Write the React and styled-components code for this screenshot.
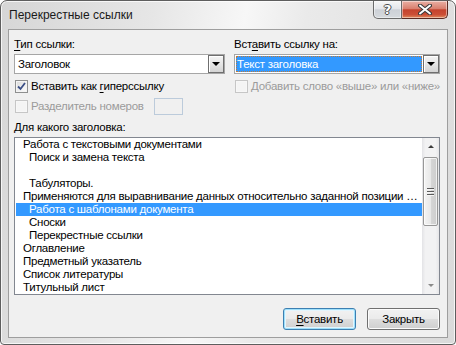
import styled, { createGlobalStyle } from 'styled-components';

const GlobalStyle = createGlobalStyle`
  html, body {
    margin: 0;
    padding: 0;
  }

  body {
    width: 456px;
    height: 345px;
    overflow: hidden;
    background: #ffffff;
    font-family: 'Liberation Sans', Arial, sans-serif;
    font-size: 11.5px;
    letter-spacing: -0.25px;
    color: #000;
  }

  * {
    box-sizing: border-box;
  }
`;

const Window = styled.div`
  width: 456px;
  height: 345px;
  display: flex;
  flex-direction: column;
  border: 1px solid #5e5e5e;
  border-radius: 7px 7px 4px 4px;
  background: linear-gradient(100deg, #d6d6d6 0%, #e6e6e6 30%, #f7f7f7 48%, #eaeaea 60%, #dadada 100%);
  box-shadow: inset 0 0 0 1px rgba(255, 255, 255, 0.75);
  overflow: hidden;
`;

const TitleBar = styled.div`
  height: 28px;
  display: flex;
  align-items: flex-start;
  padding: 0 7px 0 8px;
`;

const Title = styled.div`
  align-self: center;
  flex: 1;
  padding-top: 1px;
  font-size: 12px;
  letter-spacing: 0;
  line-height: 15px;
  color: #1a1a1a;
`;

const CaptionButton = styled.div`
  width: ${({ wide }) => (wide ? '46px' : '29px')};
  height: 18px;
  display: flex;
  align-items: center;
  justify-content: center;
  border: 1px solid ${({ wide }) => (wide ? '#5a2a22' : '#6b6b6b')};
  border-top: none;
  border-left: ${({ wide }) => (wide ? 'none' : '1px solid #6b6b6b')};
  border-radius: ${({ wide }) => (wide ? '0 0 5px 0' : '0 0 0 5px')};
  background: ${({ wide }) =>
    wide
      ? 'linear-gradient(180deg, #eab0a4 0%, #d9806f 45%, #c4432d 52%, #cc4f36 80%, #e08a5c 100%)'
      : 'linear-gradient(180deg, #f6f6f6 0%, #e4e6ea 45%, #cdd1d7 52%, #d6dade 100%)'};
  box-shadow: inset 0 0 0 1px rgba(255, 255, 255, 0.45);
`;

const HelpGlyph = styled.span`
  font-family: 'DejaVu Sans', sans-serif;
  font-size: 13px;
  font-weight: bold;
  letter-spacing: 0;
  line-height: 13px;
  color: #ffffff;
  text-shadow: 1px 0 #4a4a4a, -1px 0 #4a4a4a, 0 1px #4a4a4a, 0 -1px #4a4a4a;
`;

const Client = styled.div`
  flex: 1;
  margin: 0 7px 6px 7px;
  padding: 7px 7px 7px 5px;
  display: flex;
  flex-direction: column;
  border: 1px solid #9e9e9e;
  background: #f0f0f0;
`;

const TopGrid = styled.div`
  display: grid;
  grid-template-columns: 211px 1fr;
  column-gap: 9px;
`;

const Column = styled.div`
  display: flex;
  flex-direction: column;
`;

const Label = styled.div`
  line-height: 15px;
  margin-bottom: 2px;
`;

const Key = styled.span`
  text-decoration: underline;
  text-underline-offset: 2px;
`;

const Combo = styled.div`
  height: 20px;
  display: flex;
  align-items: stretch;
  border: 1px solid #a6a6a6;
  background: #ffffff;
  padding: 1px;
`;

const ComboValue = styled.div`
  flex: 1;
  display: flex;
  align-items: center;
  padding-left: ${({ selected }) => (selected ? '1px' : '2px')};
  margin-right: 1px;
  line-height: 14px;
  color: ${({ selected }) => (selected ? '#ffffff' : '#000')};
  background: ${({ selected }) => (selected ? '#3399ff' : 'transparent')};
  outline: ${({ selected }) => (selected ? '1px dotted #c07a3a' : 'none')};
  outline-offset: -1px;
`;

const DropButton = styled.div`
  width: 16px;
  margin: -1px -1px -1px 0;
  display: flex;
  align-items: center;
  justify-content: center;
  border: 1px solid #6f6f6f;
  background: linear-gradient(180deg, #f4f4f4 0%, #e6e6e6 50%, #d4d4d4 100%);
  box-shadow: inset 1px 1px 0 #ffffff;
`;

const Arrow = styled.span`
  width: 0;
  height: 0;
  border-left: ${({ size }) => size || 4}px solid transparent;
  border-right: ${({ size }) => size || 4}px solid transparent;
  border-top: ${({ up, size, color }) => (up ? 'none' : `${size || 4}px solid ${color || '#000'}`)};
  border-bottom: ${({ up, size, color }) => (up ? `${size || 4}px solid ${color || '#000'}` : 'none')};
`;

const CheckRow = styled.div`
  display: flex;
  align-items: center;
  height: ${({ tall }) => (tall ? '17px' : '15px')};
  margin-top: ${({ gap }) => gap}px;
  padding-left: 1px;
  white-space: nowrap;
  color: ${({ disabled }) => (disabled ? '#9b9b9b' : '#000')};
`;

const CheckText = styled.span`
  line-height: 15px;
`;

const Box = styled.span`
  flex: none;
  width: 13px;
  height: 13px;
  margin-right: 3px;
  display: flex;
  align-items: center;
  justify-content: center;
  border: 1px solid ${({ disabled }) => (disabled ? '#c6c6c6' : '#8e8f8f')};
  background: ${({ disabled }) =>
    disabled ? '#f4f4f4' : 'linear-gradient(135deg, #d8d8d8 0%, #f1f1f1 60%, #fbfbfb 100%)'};
  box-shadow: inset 0 0 0 1px ${({ disabled }) => (disabled ? '#f7f7f7' : '#f4f4f4')};
`;

const SmallInput = styled.span`
  flex: none;
  width: 29px;
  height: 17px;
  margin-left: 10px;
  border: 1px solid #bccbdb;
  background: #f0f0f0;
`;

const ListLabel = styled.div`
  line-height: 15px;
  margin-top: 5px;
  margin-bottom: 2px;
`;

const ListBox = styled.div`
  height: 158px;
  display: flex;
  border: 1px solid #828790;
  background: #ffffff;
`;

const List = styled.div`
  flex: 1;
  min-width: 0;
  padding-left: 1px;
`;

const Item = styled.div`
  height: 13px;
  line-height: 13px;
  padding-left: ${({ level }) => (level === 2 ? '13px' : '7px')};
  padding-right: 1px;
  white-space: nowrap;
  overflow: hidden;
  text-overflow: ellipsis;
  color: ${({ selected }) => (selected ? '#ffffff' : '#000')};
  background: ${({ selected }) => (selected ? '#3399ff' : 'transparent')};
`;

const ScrollBar = styled.div`
  width: 17px;
  display: flex;
  flex-direction: column;
  background: linear-gradient(90deg, #e3e3e6 0%, #f2f2f3 20%, #f2f2f3 80%, #e6e6e8 100%);
`;

const ScrollArrow = styled.div`
  height: 17px;
  display: flex;
  align-items: center;
  justify-content: center;
`;

const Track = styled.div`
  flex: 1;
  padding: 2px 1px 0 1px;
`;

const Thumb = styled.div`
  height: 69px;
  display: flex;
  flex-direction: column;
  align-items: center;
  justify-content: center;
  gap: 2px;
  border: 1px solid #979797;
  border-radius: 2px;
  background: linear-gradient(90deg, #f4f4f4 0%, #e8e8e8 50%, #d6d6d6 51%, #cdcdcd 100%);
  box-shadow: inset 0 0 0 1px rgba(255, 255, 255, 0.7);
`;

const Grip = styled.span`
  width: 7px;
  height: 1px;
  background: #5a5a5a;
  box-shadow: 0 1px 0 #f6f6f6;
`;

const ButtonRow = styled.div`
  display: flex;
  justify-content: flex-end;
  gap: 11px;
  margin-top: 13px;
`;

const Button = styled.button`
  width: 73px;
  height: 22px;
  padding: 0;
  font-family: inherit;
  font-size: 11.5px;
  letter-spacing: -0.25px;
  color: #000;
  border-radius: 3px;
  border: 1px solid ${({ primary }) => (primary ? '#3c7fb1' : '#707070')};
  background: linear-gradient(180deg, #f2f2f2 0%, #ebebeb 48%, #dddddd 52%, #cfcfcf 100%);
  box-shadow: ${({ primary }) =>
    primary ? 'inset 0 0 0 1px #9fe0fb, inset 0 0 0 2px #e3f5fd' : 'inset 0 0 0 1px #fcfcfc'};
`;

const items = [
  { text: 'Работа с текстовыми документами', level: 1 },
  { text: 'Поиск и замена текста', level: 2 },
  { text: '', level: 2 },
  { text: 'Табуляторы.', level: 2 },
  { text: 'Применяются для выравнивание данных относительно заданной позиции табуляции.', level: 1 },
  { text: 'Работа с шаблонами документа', level: 2, selected: true },
  { text: 'Сноски', level: 2 },
  { text: 'Перекрестные ссылки', level: 2 },
  { text: 'Оглавление', level: 1 },
  { text: 'Предметный указатель', level: 1 },
  { text: 'Список литературы', level: 1 },
  { text: 'Титульный лист', level: 1 },
];

const CheckMark = () => (
  <svg width='9' height='9' viewBox='0 0 9 9'>
    <path d='M1 4.5 L3.5 7 L8 1' fill='none' stroke='#3b4f86' strokeWidth='1.8' />
  </svg>
);

const CloseGlyph = () => (
  <svg width='14' height='11' viewBox='0 0 14 11'>
    <path d='M2 1.5 L12 9.5 M12 1.5 L2 9.5' stroke='#3a3a3a' strokeWidth='4' strokeLinecap='round' />
    <path d='M2 1.5 L12 9.5 M12 1.5 L2 9.5' stroke='#ffffff' strokeWidth='2' strokeLinecap='round' />
  </svg>
);

const App = () => {
  return (
    <>
      <GlobalStyle />
      <Window>
        <TitleBar>
          <Title>Перекрестные ссылки</Title>
          <CaptionButton>
            <HelpGlyph>?</HelpGlyph>
          </CaptionButton>
          <CaptionButton wide>
            <CloseGlyph />
          </CaptionButton>
        </TitleBar>
        <Client>
          <TopGrid>
            <Column>
              <Label>
                <Key>Т</Key>ип ссылки:
              </Label>
              <Combo>
                <ComboValue>Заголовок</ComboValue>
                <DropButton>
                  <Arrow />
                </DropButton>
              </Combo>
              <CheckRow gap={5}>
                <Box>
                  <CheckMark />
                </Box>
                <CheckText>
                  Вставить как <Key>г</Key>иперссылку
                </CheckText>
              </CheckRow>
              <CheckRow gap={4} tall disabled>
                <Box disabled />
                <CheckText>Разделитель номеров</CheckText>
                <SmallInput />
              </CheckRow>
            </Column>
            <Column>
              <Label>
                Вст<Key>а</Key>вить ссылку на:
              </Label>
              <Combo>
                <ComboValue selected>Текст заголовка</ComboValue>
                <DropButton>
                  <Arrow />
                </DropButton>
              </Combo>
              <CheckRow gap={5} disabled>
                <Box disabled />
                <CheckText>Добавить слово «выше» или «ниже»</CheckText>
              </CheckRow>
            </Column>
          </TopGrid>
          <ListLabel>Для какого заголовка:</ListLabel>
          <ListBox>
            <List>
              {items.map((item, i) => (
                <Item key={i} level={item.level} selected={item.selected}>
                  {item.text}
                </Item>
              ))}
            </List>
            <ScrollBar>
              <ScrollArrow>
                <Arrow up size={3} color='#3c3c3c' />
              </ScrollArrow>
              <Track>
                <Thumb>
                  <Grip />
                  <Grip />
                  <Grip />
                </Thumb>
              </Track>
              <ScrollArrow>
                <Arrow size={3} color='#8a8a8a' />
              </ScrollArrow>
            </ScrollBar>
          </ListBox>
          <ButtonRow>
            <Button primary>
              <Key>В</Key>ставить
            </Button>
            <Button>Закрыть</Button>
          </ButtonRow>
        </Client>
      </Window>
    </>
  );
};

export default App;
